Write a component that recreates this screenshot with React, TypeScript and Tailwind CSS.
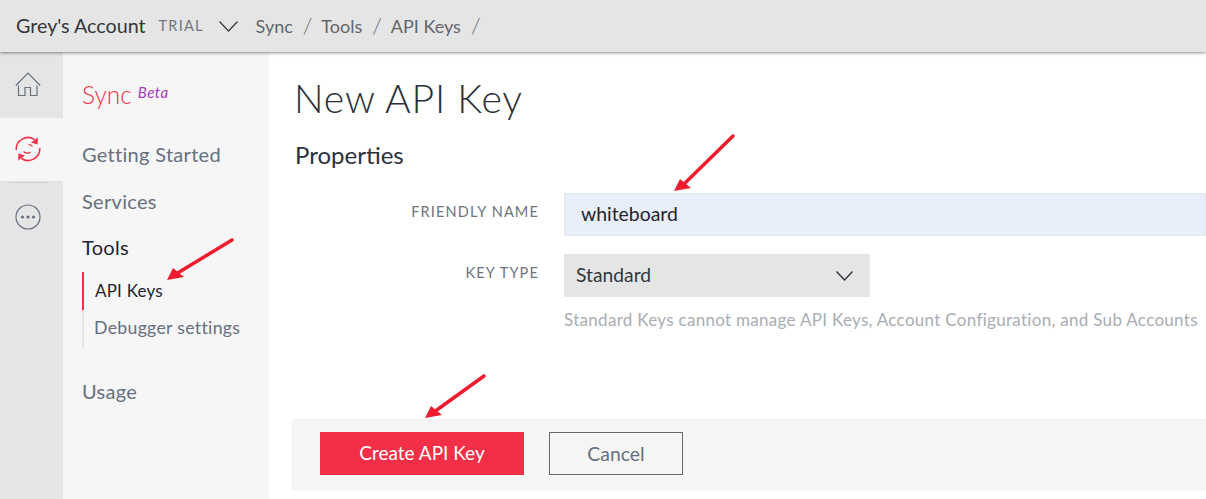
import React from "react";

const Chevron = ({ width, height, color, className }: { width: number; height: number; color: string; className?: string }) => (
  <svg className={className} width={width} height={height} viewBox={`0 0 ${width} ${height}`} fill="none" stroke={color} strokeWidth="1.300">
    <path d={`M0.5 0.5 ${width / 2} ${height - 1} ${width - 0.5} 0.5`} />
  </svg>
);

const HomeIcon = () => (
  <svg width="26" height="25" viewBox="0 0 26 25" fill="none" stroke="#66707f" strokeWidth="1.200">
    <path d="M0.800 13.500 13 1 25.200 13.500" />
    <path d="M3.500 13.500V23.500h6.500V15.500h5.500v8h6.500V13.500" />
  </svg>
);

const SyncIcon = () => (
  <svg width="26" height="26" viewBox="0 0 26 26" fill="none">
    <path d="M1.200 14A11.800 11.800 0 0 1 19.500 3.500" stroke="#f22f46" strokeWidth="1.500" />
    <path d="M24.800 12A11.800 11.800 0 0 1 6.500 22.500" stroke="#f22f46" strokeWidth="1.500" />
    <path d="M23 1.500 22.500 8.500 16 6.500Z" fill="#f22f46" />
    <path d="M3 24.500 3.500 17.500 10 19.500Z" fill="#f22f46" />
    <path d="M8.500 15.500A5 5 0 0 0 15.500 16M17.500 10.500A5 5 0 0 0 13.500 8.500" stroke="#f22f46" strokeWidth="1.200" />
  </svg>
);

const MoreIcon = () => (
  <svg width="26" height="26" viewBox="0 0 26 26" fill="none">
    <circle cx="13" cy="13" r="12" stroke="#66707f" strokeWidth="1.200" />
    <circle cx="7.500" cy="13" r="1.600" fill="#66707f" />
    <circle cx="13" cy="13" r="1.600" fill="#66707f" />
    <circle cx="18.500" cy="13" r="1.600" fill="#66707f" />
  </svg>
);

// red annotation arrow pasted on top of the screenshot
const Arrow = ({ className, width, height }: { className: string; width: number; height: number }) => (
  <svg className={className} width={width} height={height} viewBox={`0 0 ${width} ${height}`} fill="none">
    <line x1={width - 2} y1="2" x2="9" y2={height - 6} stroke="#ee1c2e" strokeWidth="3.500" strokeLinecap="round" />
    <polygon points={`0,${height} 6,${height - 12} 17,${height - 3}`} fill="#ee1c2e" />
  </svg>
);

const SideLink = ({ children, className }: { children: React.ReactNode; className: string }) => (
  <div className={`text-[20px] leading-[24px] tracking-[0.3px] ${className}`}>{children}</div>
);

export default function App() {
  return (
    <div className="relative h-[499px] w-[1206px] overflow-hidden bg-white font-['Lato','Open_Sans',sans-serif]">
      <header className="relative z-10 flex h-[52px] items-center bg-[#e5e5e5] pl-4 shadow-[0_1px_3px_rgba(0,0,0,0.45)]">
        <span className="text-[19.700px] text-[#33363b]">Grey's Account</span>
        <span className="ml-[13px] text-[14.500px] tracking-[1.200px] text-[#72767c]">TRIAL</span>
        <Chevron className="ml-[15px]" width={19} height={11} color="#3a3d42" />
        <nav className="ml-[18px] flex items-center text-[18px] text-[#62666c]">
          <span>Sync</span>
          <span className="ml-[10px] text-[22px] font-light leading-[24px]">/</span>
          <span className="ml-[9px]">Tools</span>
          <span className="ml-[10px] text-[22px] font-light leading-[24px]">/</span>
          <span className="ml-[9px]">API Keys</span>
          <span className="ml-[10px] text-[22px] font-light leading-[24px]">/</span>
        </nav>
      </header>

      <div className="flex h-[447px]">
        <aside className="flex w-[63px] flex-col bg-[#e5e5e5]">
          <div className="flex h-[66px] w-full items-center pb-[2px] pl-[15px]">
            <HomeIcon />
          </div>
          <div className="flex h-[63px] w-full items-center bg-[#f6f6f6] pb-[2px] pl-[15px]">
            <SyncIcon />
          </div>
          <div className="ml-[9px] mt-[1px] h-px w-[39px] bg-[#cfcfcf]" />
          <div className="ml-[15px] mt-[21px]">
            <MoreIcon />
          </div>
        </aside>

        <div className="w-[206px] bg-[#f6f6f6] pl-[19px] pt-[28px]">
          <div className="flex items-start">
            <span className="text-[24.500px] font-light leading-[30px] text-[#f22f46]">Sync</span>
            <span className="ml-[6px] mt-[3px] text-[15px] italic leading-[18px] tracking-[0.5px] text-[#a53ab8]">Beta</span>
          </div>
          <SideLink className="mt-[32px] text-[#66707f]">Getting Started</SideLink>
          <SideLink className="mt-[23px] text-[#66707f]">Services</SideLink>
          <SideLink className="mt-[22px] text-[#1f2430]">Tools</SideLink>
          <div className="mt-[13px]">
            <div className="flex h-[38px] items-center border-l-2 border-[#f22f46] pl-[11px] text-[17px] tracking-[0.2px] text-[#1f2430]">API Keys</div>
            <div className="flex h-[38px] items-center border-l-2 border-[#e5e5e5] pb-[2px] pl-[10px] text-[17.700px] tracking-[0.3px] text-[#66707f]">Debugger settings</div>
          </div>
          <SideLink className="mt-[31px] text-[#66707f]">Usage</SideLink>
        </div>

        <main className="min-w-0 flex-1 pt-[23px]">
          <h1 className="pl-[25px] text-[39.200px] font-light leading-[46px] tracking-[0.8px] text-[#2b2f38]">New API Key</h1>
          <h2 className="mt-[20px] pl-[26px] text-[24px] leading-[28px] text-[#2b2f38]">Properties</h2>
          <div className="mt-[24px] flex items-start">
            <label className="w-[270px] pt-[9px] text-right text-[14.500px] uppercase leading-[20px] tracking-[1.150px] text-[#6e7480]">Friendly Name</label>
            <div className="ml-[25px] flex h-[43px] flex-1 items-center border border-[#e3e6ea] bg-[#e8effb] pb-[1px] pl-4 text-[19.400px] text-[#1f2430]">whiteboard</div>
          </div>
          <div className="mt-[18px] flex items-start">
            <label className="w-[270px] pt-[9px] text-right text-[14.500px] uppercase leading-[20px] tracking-[1.150px] text-[#6e7480]">Key Type</label>
            <div className="ml-[25px]">
              <div className="flex h-[43px] w-[306px] items-center justify-between bg-[#e5e5e5] pl-3 pr-[17px] text-[19.300px] text-[#33363b]">
                <span>Standard</span>
                <Chevron width={17} height={10} color="#2b2f38" />
              </div>
              <p className="mt-[13px] whitespace-nowrap text-[17px] leading-[20px] tracking-[0.3px] text-[#a9adb3]">Standard Keys cannot manage API Keys, Account Configuration, and Sub Accounts</p>
            </div>
          </div>
          <div className="ml-[24px] mt-[90px] flex h-[69px] items-center gap-[25px] bg-[#f5f5f5] pb-[2px] pl-[27px] shadow-[0_0_2px_rgba(0,0,0,0.18)]">
            <button className="h-[43px] w-[204px] bg-[#f22f46] text-[19px] text-white">Create API Key</button>
            <button className="h-[43px] w-[134px] border border-[#66696e] text-[19.400px] text-[#66707f]">Cancel</button>
          </div>
        </main>
      </div>

      <Arrow className="absolute left-[167px] top-[238px] z-20" width={67} height={42} />
      <Arrow className="absolute left-[674px] top-[134px] z-20" width={61} height={57} />
      <Arrow className="absolute left-[425px] top-[374px] z-20" width={61} height={44} />
    </div>
  );
}
